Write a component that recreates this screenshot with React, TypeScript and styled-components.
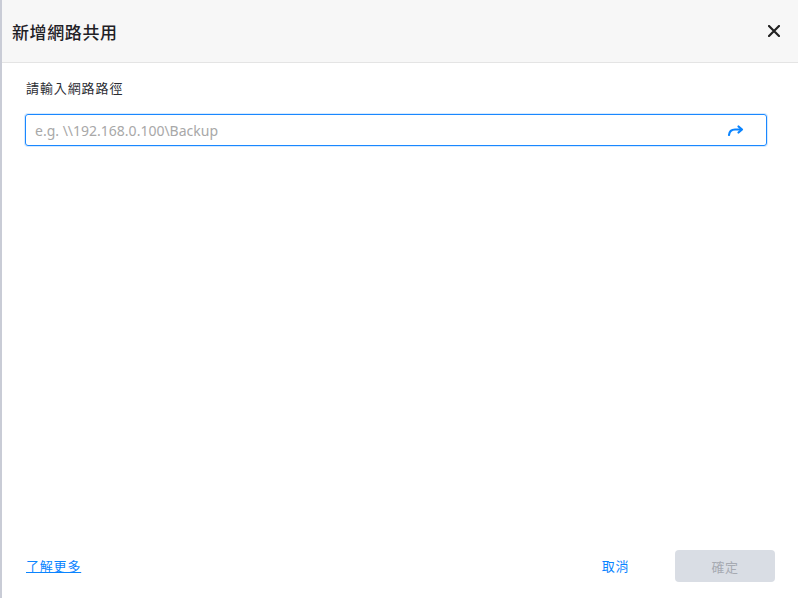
import * as React from 'react'
import styled, { createGlobalStyle } from 'styled-components'

const GlobalStyle = createGlobalStyle`
  html, body {
    margin: 0;
    padding: 0;
    background: #ffffff;
  }
  body {
    font-family: "Noto Sans", "Noto Sans CJK TC", sans-serif;
  }
  * {
    box-sizing: border-box;
  }
`

const Dialog = styled.div`
  width: 798px;
  height: 598px;
  display: flex;
  flex-direction: column;
  background: #ffffff;
  border-left: 2px solid #c9ccd6;
  overflow: hidden;
`

const Header = styled.div`
  height: 63px;
  flex: none;
  display: flex;
  align-items: center;
  justify-content: space-between;
  padding: 0 12px 0 10px;
  background: #f7f7f7;
  border-bottom: 1px solid #e4e4e4;
`

const Title = styled.h1`
  margin: 0;
  font-size: 17px;
  font-weight: 500;
  color: #1f2126;
  letter-spacing: 0.6px;
`

const CloseButton = styled.button`
  width: 24px;
  height: 24px;
  border: 0;
  padding: 0;
  background: transparent;
  cursor: pointer;
  display: flex;
  align-items: center;
  justify-content: center;
`

const Body = styled.div`
  flex: 1;
  padding: 16px 31px 0 23px;
  display: flex;
  flex-direction: column;
`

const Label = styled.label`
  font-size: 13px;
  color: #2b2d33;
  letter-spacing: 0.9px;
  line-height: 18px;
  margin-bottom: 17px;
  padding-left: 1px;
`

const InputBox = styled.div`
  height: 32px;
  display: flex;
  align-items: center;
  border: 1px solid #1a88ff;
  border-radius: 3px;
  box-shadow: 0 0 0 1px rgba(26, 136, 255, 0.18);
  padding: 0 21px 0 9px;
`

const Input = styled.input`
  flex: 1;
  border: 0;
  outline: none;
  font-family: "Noto Sans", "Noto Sans CJK TC", sans-serif;
  font-size: 14px;
  color: #222;
  background: transparent;
  padding: 0;
  &::placeholder {
    color: #a8a8a8;
  }
`

const GoButton = styled.button`
  border: 0;
  padding: 0;
  background: transparent;
  display: flex;
  align-items: center;
  cursor: pointer;
`

const Footer = styled.div`
  height: 64px;
  flex: none;
  display: flex;
  align-items: flex-start;
  padding: 16px 23px 0 24px;
`

const Link = styled.a`
  font-size: 13px;
  line-height: 32px;
  color: #0a84ff;
  text-decoration: underline;
  letter-spacing: 0.8px;
  cursor: pointer;
`

const Spacer = styled.div`
  flex: 1;
`

const TextButton = styled.button`
  border: 0;
  background: transparent;
  font-family: inherit;
  font-size: 13px;
  line-height: 32px;
  color: #0a84ff;
  letter-spacing: 0.6px;
  padding: 0;
  margin-right: 46px;
  cursor: pointer;
`

const PrimaryButton = styled.button<{ $disabled?: boolean }>`
  width: 100px;
  height: 32px;
  border: 0;
  border-radius: 4px;
  font-family: inherit;
  font-size: 13px;
  letter-spacing: 0.6px;
  background: ${({ $disabled }) => ($disabled ? '#d9dde4' : '#0a84ff')};
  color: ${({ $disabled }) => ($disabled ? '#a6aab2' : '#ffffff')};
  cursor: ${({ $disabled }) => ($disabled ? 'default' : 'pointer')};
`

export default function App() {
  const [path, setPath] = React.useState('')
  return (
    <>
      <GlobalStyle />
      <Dialog>
        <Header>
          <Title>新增網路共用</Title>
          <CloseButton aria-label="close">
            <svg width="12" height="12" viewBox="0 0 12 12">
              <path d="M1 1L11 11M11 1L1 11" stroke="#222" strokeWidth="2.2" strokeLinecap="round" />
            </svg>
          </CloseButton>
        </Header>
        <Body>
          <Label>請輸入網路路徑</Label>
          <InputBox>
            <Input
              autoFocus
              value={path}
              onChange={e => setPath(e.target.value)}
              placeholder="e.g. \\192.168.0.100\Backup"
            />
            <GoButton aria-label="go">
              <svg width="18" height="12" viewBox="0 0 18 12">
                <path d="M2 11 C2.5 6.5 5 5.5 8 5.5 H14" fill="none" stroke="#0a84ff" strokeWidth="2.2" strokeLinecap="round" />
                <path d="M11.5 2.5 L15 5.5 L11.5 8.5" fill="none" stroke="#0a84ff" strokeWidth="2.2" strokeLinecap="round" strokeLinejoin="round" />
              </svg>
            </GoButton>
          </InputBox>
        </Body>
        <Footer>
          <Link>了解更多</Link>
          <Spacer />
          <TextButton>取消</TextButton>
          <PrimaryButton $disabled disabled>確定</PrimaryButton>
        </Footer>
      </Dialog>
    </>
  )
}
